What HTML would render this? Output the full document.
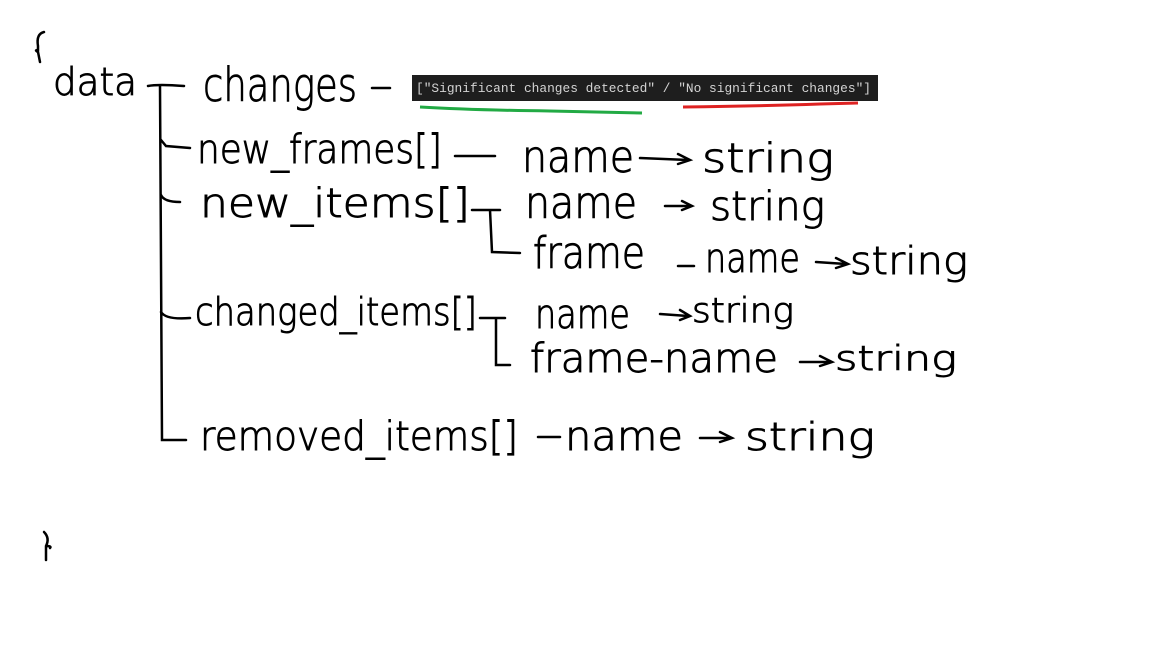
<!DOCTYPE html>
<html><head><meta charset="utf-8"><style>
html,body{margin:0;padding:0;background:#fff;width:1152px;height:648px;overflow:hidden}
svg{display:block}
.h{font-family:"DejaVu Sans","Liberation Sans",sans-serif;fill:#000;font-weight:200;stroke:#000;stroke-width:0.9}
</style></head><body>
<svg width="1152" height="648" viewBox="0 0 1152 648">
<g fill="none" stroke="#000" stroke-width="2.5" stroke-linecap="round">
<path d="M44 32 Q36 34 38 46 L38 50 Q34 50 38 52 L40 62"/>
<path d="M44 532 Q50 538 46 546 L46 560 M46 546 Q52 546 50 548"/>
<path d="M148 86 Q158 84 184 86"/>
<path d="M160 86 L162 440 L186 440"/>
<path d="M161 140 L166 146 L190 148"/>
<path d="M161 195 Q164 202 180 202"/>
<path d="M161 312 Q166 320 190 318"/>
<path d="M372 88 L390 88"/>
<path d="M455 156 L495 156"/>
<path d="M472 210 L500 210 M490 210 L492 252 L520 253"/>
<path d="M480 318 L505 318 M496 318 L496 365 L510 365"/>
<path d="M678 266 L694 266"/>
<path d="M538 437 L560 437"/>
<path d="M640 158 L688 160 M678 154 L690 160 L678 164"/>
<path d="M665 206 L690 206 M682 201 L692 206 L682 210"/>
<path d="M816 262 L846 264 M836 258 L848 264 L836 268"/>
<path d="M660 314 L688 316 M680 310 L690 316 L680 320"/>
<path d="M800 362 L830 362 M820 356 L832 362 L820 366"/>
<path d="M700 438 L730 438 M720 432 L732 438 L720 442"/>
</g>
<text class="h" x="53" y="95" font-size="38" textLength="84" lengthAdjust="spacingAndGlyphs">data</text>
<text class="h" x="203" y="101" font-size="46" textLength="154" lengthAdjust="spacingAndGlyphs">changes</text>
<text class="h" x="197" y="163" font-size="40" textLength="245" lengthAdjust="spacingAndGlyphs">new_frames[]</text>
<text class="h" x="522" y="172" font-size="44" textLength="112" lengthAdjust="spacingAndGlyphs">name</text>
<text class="h" x="702" y="172" font-size="40" textLength="132" lengthAdjust="spacingAndGlyphs">string</text>
<text class="h" x="200" y="217" font-size="40" textLength="270" lengthAdjust="spacingAndGlyphs">new_items[]</text>
<text class="h" x="525" y="218" font-size="44" textLength="112" lengthAdjust="spacingAndGlyphs">name</text>
<text class="h" x="710" y="220" font-size="40" textLength="115" lengthAdjust="spacingAndGlyphs">string</text>
<text class="h" x="533" y="268" font-size="44" textLength="112" lengthAdjust="spacingAndGlyphs">frame</text>
<text class="h" x="705" y="272" font-size="40" textLength="95" lengthAdjust="spacingAndGlyphs">name</text>
<text class="h" x="850" y="274" font-size="38" textLength="118" lengthAdjust="spacingAndGlyphs">string</text>
<text class="h" x="195" y="325" font-size="38" textLength="282" lengthAdjust="spacingAndGlyphs">changed_items[]</text>
<text class="h" x="535" y="328" font-size="40" textLength="95" lengthAdjust="spacingAndGlyphs">name</text>
<text class="h" x="692" y="322" font-size="34" textLength="102" lengthAdjust="spacingAndGlyphs">string</text>
<text class="h" x="530" y="372" font-size="40" textLength="248" lengthAdjust="spacingAndGlyphs">frame-name</text>
<text class="h" x="835" y="370" font-size="34" textLength="122" lengthAdjust="spacingAndGlyphs">string</text>
<text class="h" x="200" y="450" font-size="40" textLength="318" lengthAdjust="spacingAndGlyphs">removed_items[]</text>
<text class="h" x="565" y="450" font-size="40" textLength="118" lengthAdjust="spacingAndGlyphs">name</text>
<text class="h" x="745" y="450" font-size="38" textLength="130" lengthAdjust="spacingAndGlyphs">string</text>
<rect x="412" y="75" width="466" height="26" fill="#1e1e1e"/>
<text x="416" y="92" font-family="Liberation Mono,monospace" font-size="13" fill="#d4d4d4" textLength="455" lengthAdjust="spacingAndGlyphs">["Significant changes detected" / "No significant changes"]</text>
<path d="M420 107 Q470 110 550 111 L642 113" stroke="#22aa44" stroke-width="3" fill="none"/>
<path d="M683 107 Q760 106 820 104 L858 103" stroke="#dd2222" stroke-width="3" fill="none"/>
</svg>
</body></html>
